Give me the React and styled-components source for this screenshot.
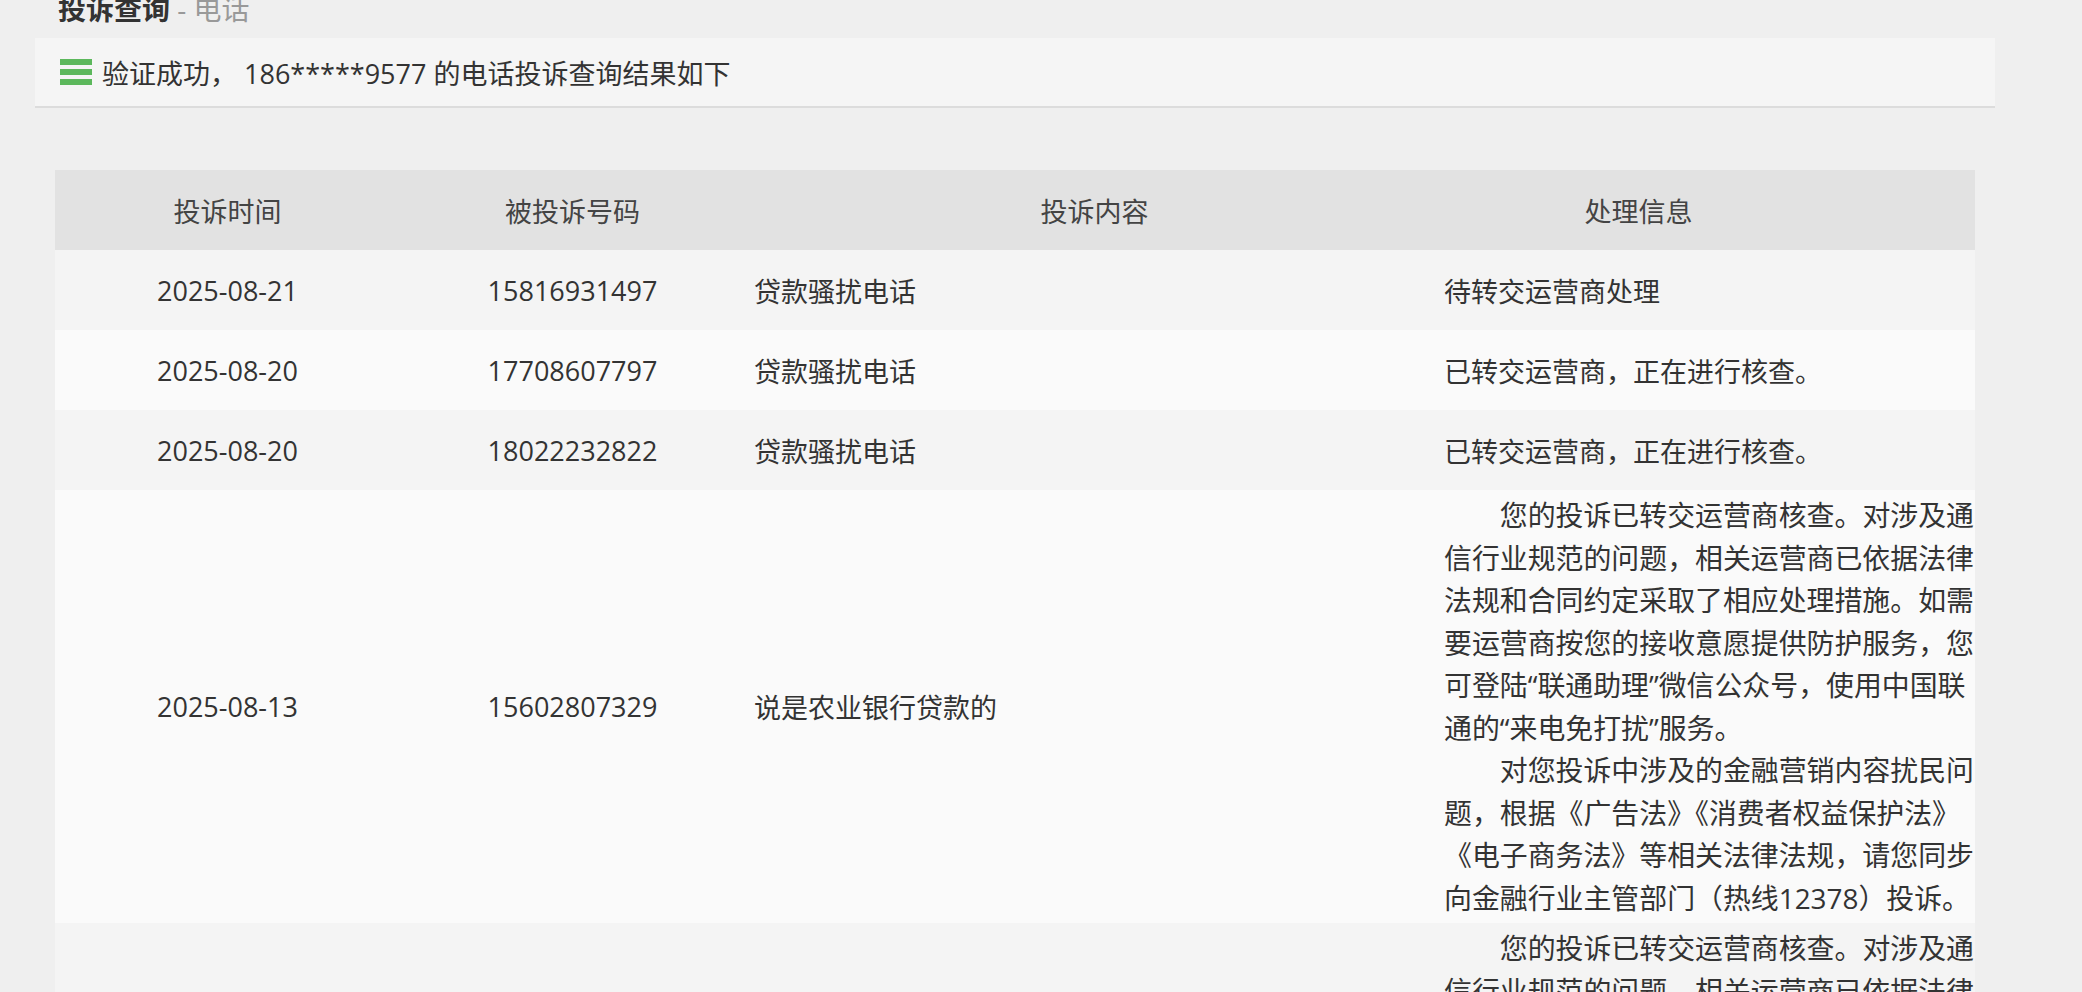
import React from "react";
import styled, { createGlobalStyle } from "styled-components";

const Global = createGlobalStyle`
  html, body { margin: 0; background: #efefef; overflow: hidden; }
  body { font-family: "Open Sans", "Noto Sans CJK SC", sans-serif; color: #333; }
`;

const Page = styled.div`
  width: 2082px; height: 992px; overflow: hidden;
`;
const Title = styled.div`
  margin: -10px 0 0 58px; height: 48px;
  font-size: 28px; line-height: 38px;
  b { color: #333; font-weight: 700; }
  span { color: #999; }
`;
const Bar = styled.div`
  margin-left: 35px; width: 1960px; height: 70px;
  background: #f5f5f5; border-bottom: 2px solid #dcdcdc;
  display: flex; align-items: center; gap: 10px; padding-left: 25px; box-sizing: border-box;
  font-size: 27px;
`;
const Icon = styled.div`
  width: 32px; height: 26px; display: flex; flex-direction: column; justify-content: space-between;
  i { display: block; height: 6px; background: #5cb85c; }
`;
const Table = styled.div`
  margin: 62px 0 0 55px; width: 1920px;
  display: grid; grid-template-columns: 345px 345px 699px 531px;
  font-size: 27px;
`;
const Cell = styled.div`
  background: ${p => p.$bg};
  display: flex; align-items: center;
  justify-content: ${p => p.$left ? "flex-start" : "center"};
  padding-left: ${p => p.$pl || 0}px; padding-right: ${p => p.$pr || 0}px;
  min-height: 80px; box-sizing: border-box; color: ${p => p.$head ? "#444" : "#333"};
`;
const Long = styled.div`
  font-size: 27.9px; line-height: 42.5px; padding: 4px 0;
  p { margin: 0; text-indent: 2em; }
`;

const rows = [
  ["2025-08-21", "15816931497", "贷款骚扰电话", "待转交运营商处理", "#f4f4f4"],
  ["2025-08-20", "17708607797", "贷款骚扰电话", "已转交运营商，正在进行核查。", "#fafafa"],
  ["2025-08-20", "18022232822", "贷款骚扰电话", "已转交运营商，正在进行核查。", "#f4f4f4"],
];
const longText = (
  <Long>
    <p>您的投诉已转交运营商核查。对涉及通信行业规范的问题，相关运营商已依据法律法规和合同约定采取了相应处理措施。如需要运营商按您的接收意愿提供防护服务，您可登陆“联通助理”微信公众号，使用中国联通的“来电免打扰”服务。</p>
    <p>对您投诉中涉及的金融营销内容扰民问题，根据《广告法》《消费者权益保护法》《电子商务法》等相关法律法规，请您同步向金融行业主管部门（热线12378）投诉。</p>
  </Long>
);

export default function App() {
  const H = "#e2e2e2";
  return (
    <Page>
      <Global />
      <Title><b>投诉查询</b><span> - 电话</span></Title>
      <Bar><Icon><i /><i /><i /></Icon>验证成功， 186*****9577 的电话投诉查询结果如下</Bar>
      <Table>
        <Cell $head $bg={H}>投诉时间</Cell>
        <Cell $head $bg={H}>被投诉号码</Cell>
        <Cell $head $bg={H}>投诉内容</Cell>
        <Cell $head $bg={H} $pr={142}>处理信息</Cell>
        {rows.map((r, i) => (
          <React.Fragment key={i}>
            <Cell $bg={r[4]}>{r[0]}</Cell>
            <Cell $bg={r[4]}>{r[1]}</Cell>
            <Cell $bg={r[4]} $left $pl={9}>{r[2]}</Cell>
            <Cell $bg={r[4]} $left>{r[3]}</Cell>
          </React.Fragment>
        ))}
        <Cell $bg="#fafafa">2025-08-13</Cell>
        <Cell $bg="#fafafa">15602807329</Cell>
        <Cell $bg="#fafafa" $left $pl={9}>说是农业银行贷款的</Cell>
        <Cell $bg="#fafafa" $left>{longText}</Cell>
        <Cell $bg="#f4f4f4">2025-08-12</Cell>
        <Cell $bg="#f4f4f4">13800000000</Cell>
        <Cell $bg="#f4f4f4" $left $pl={9}>贷款骚扰电话</Cell>
        <Cell $bg="#f4f4f4" $left>{longText}</Cell>
      </Table>
    </Page>
  );
}
